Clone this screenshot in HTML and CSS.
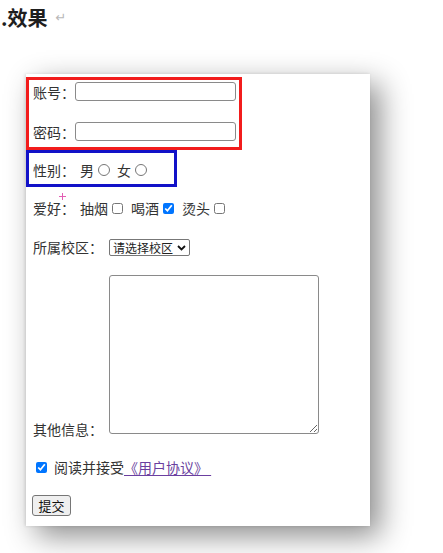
FILE: index.html
```html
<!DOCTYPE html>
<html lang="zh-CN">
<head>
<meta charset="utf-8">
<title>效果</title>
<link rel="stylesheet" href="styles.css">
</head>
<body>
<div class="page">
  <h2 class="title">.效果<span class="ret">↵</span></h2>

  <div class="card">
    <div class="box-red">
      <div class="row">
        <span class="label">账号：</span>
        <input class="text" type="text">
      </div>
      <div class="row row-second">
        <span class="label">密码：</span>
        <input class="text" type="password">
      </div>
    </div>

    <div class="box-blue">
      <span class="label">性别：</span>
      <span class="opt first">男</span><input class="radio" type="radio" name="sex">
      <span class="opt">女</span><input class="radio" type="radio" name="sex">
    </div>

    <div class="line hobby">
      <span class="label">爱好：</span>
      <span class="opt first">抽烟</span><input class="check" type="checkbox">
      <span class="opt">喝酒</span><input class="check" type="checkbox" checked>
      <span class="opt">烫头</span><input class="check" type="checkbox">
      <svg class="cursor" width="7" height="7" viewBox="0 0 7 7"><path d="M3.5 0 V7 M0 3.5 H7" stroke="#e35fb4" stroke-width="1"/></svg>
    </div>

    <div class="line school">
      <span class="label wide">所属校区：</span>
      <span class="select-wrap">
        <select class="select">
          <option>请选择校区</option>
        </select>
        <svg class="chev" width="9" height="6" viewBox="0 0 9 6"><path d="M1 1 L4.5 4.5 L8 1" fill="none" stroke="#111" stroke-width="1.8"/></svg>
      </span>
    </div>

    <div class="line info">
      <span class="label wide">其他信息：</span>
      <textarea class="area"></textarea>
    </div>

    <div class="line agree">
      <input class="check agree-check" type="checkbox" checked>
      <span>阅读并接受</span><a class="link" href="#">《用户协议》&nbsp;</a>
    </div>

    <div class="line submit">
      <button class="btn" type="button">提交</button>
    </div>
  </div>
</div>
</body>
</html>
```

FILE: styles.css
```css
* { box-sizing: border-box; }

html, body {
  margin: 0;
  padding: 0;
  background: #ffffff;
}

.page {
  width: 443px;
  height: 553px;
  overflow: hidden;
  font-family: "Noto Sans CJK SC", "Noto Sans", sans-serif;
  color: #333;
}

.title {
  margin: 6px 0 0 0;
  padding-left: 1px;
  font-size: 20px;
  line-height: 24px;
  font-weight: 700;
  color: #1e1e1e;
  display: flex;
  align-items: center;
}

.ret {
  font-weight: 400;
  font-size: 13px;
  color: #b8b8b8;
  margin-left: 8px;
  font-family: "DejaVu Sans", sans-serif;
}

.card {
  margin: 44px 0 0 26px;
  width: 344px;
  height: 452px;
  background: #fff;
  box-shadow: 10px 10px 28px rgba(0, 0, 0, 0.45), -1px 0 3px rgba(0, 0, 0, 0.12);
  font-size: 14px;
  display: flex;
  flex-direction: column;
  align-items: flex-start;
}

.label {
  width: 42px;
  flex: none;
  line-height: 20px;
}
.label.wide { width: 70px; }

.box-red {
  margin-top: 3px;
  width: 216px;
  height: 73px;
  border: 3px solid #f21c1c;
  padding: 2px 0 0 4px;
}

.row {
  display: flex;
  align-items: center;
  height: 19px;
}
.row-second { margin-top: 21px; }

.text {
  width: 161px;
  height: 19px;
  border: 1px solid #8a8a8a;
  border-radius: 3px;
  margin: 0;
  padding: 0 3px;
  font-size: 13px;
  background: #fff;
}

.box-blue {
  width: 151px;
  height: 37px;
  border: 3px solid #1212c8;
  padding: 3px 0 0 4px;
  display: flex;
  align-items: center;
}

.opt {
  line-height: 20px;
  margin-left: 7px;
}
.opt.first { margin-left: 5px; }

.radio {
  width: 12px;
  height: 12px;
  margin: 0 0 0 4px;
  accent-color: #0075ff;
}

.line {
  display: flex;
  align-items: center;
  padding-left: 7px;
  position: relative;
}

.hobby { margin-top: 11px; height: 20px; }
.hobby .opt { margin-left: 8px; }
.hobby .opt.first { margin-left: 5px; }

.check {
  width: 11px;
  height: 11px;
  margin: 0 0 0 4px;
  accent-color: #0075ff;
}

.cursor {
  position: absolute;
  left: 33px;
  top: -5px;
}

.school { margin-top: 19px; height: 20px; }

.select-wrap {
  position: relative;
  margin-left: 6px;
  display: inline-flex;
}

.select {
  appearance: none;
  -webkit-appearance: none;
  width: 81px;
  height: 17px;
  margin: 0;
  padding: 0 0 0 3px;
  border: 1px solid #777;
  border-radius: 2px;
  background: #fff;
  font-family: "Noto Sans CJK SC", sans-serif;
  font-size: 12px;
  line-height: 15px;
  color: #222;
}

.chev {
  position: absolute;
  right: 4px;
  top: 6px;
  pointer-events: none;
}

.info {
  margin-top: 18px;
  align-items: flex-end;
}
.info .label { line-height: 20px; }

.area {
  width: 210px;
  height: 159px;
  margin: 0 0 5px 6px;
  border: 1px solid #8a8a8a;
  border-radius: 3px;
  resize: both;
  padding: 2px;
  background: #fff;
}

.agree {
  margin-top: 18px;
  padding-left: 10px;
  line-height: 20px;
  height: 20px;
}
.agree-check { margin: 0 7px 0 0; }

.link {
  color: #6b3fa0;
  text-decoration: underline;
  text-underline-offset: 2px;
}

.submit {
  margin-top: 18px;
  padding-left: 6px;
}

.btn {
  width: 39px;
  height: 21px;
  margin: 0;
  padding: 0;
  font-family: "Noto Sans CJK SC", sans-serif;
  font-size: 13px;
  line-height: 19px;
  color: #111;
  background: #efefef;
  border: 1px solid #767676;
  border-radius: 3px;
}
```
